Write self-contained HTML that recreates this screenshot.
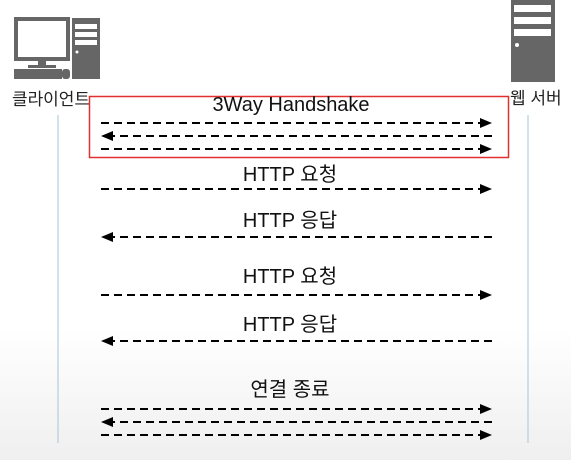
<!DOCTYPE html><html><head><meta charset="utf-8"><style>
html,body{margin:0;padding:0}
body{width:571px;height:460px;overflow:hidden;background:linear-gradient(#fff 0,#fff 330px,#efefef 460px);font-family:"Liberation Sans","Noto Sans CJK KR",sans-serif}
</style></head><body>
<svg width="571" height="460" xmlns="http://www.w3.org/2000/svg" style="position:absolute;left:0;top:0">
<defs><marker id="a" markerWidth="12" markerHeight="10" refX="2" refY="5" orient="auto" markerUnits="userSpaceOnUse"><path d="M0,0 L12,5 L0,10 Z" fill="#000"/></marker></defs>
<rect x="14" y="17" width="56" height="44" fill="#666"/>
<rect x="18" y="21" width="48" height="36" fill="#fff"/>
<rect x="38" y="61" width="8" height="5" fill="#666"/>
<rect x="28" y="65" width="28" height="3" fill="#666"/>
<rect x="14" y="69" width="48" height="10" fill="#666"/>
<rect x="62" y="69" width="8" height="10" rx="3" fill="#666"/>
<rect x="72" y="18" width="28" height="61" fill="#666"/>
<rect x="75" y="24" width="22" height="5" fill="#fff"/>
<rect x="75" y="32" width="22" height="5" fill="#fff"/>
<rect x="75" y="40" width="22" height="5" fill="#fff"/>
<circle cx="77" cy="52" r="1.5" fill="#fff"/>
<rect x="511" y="0" width="44" height="82" fill="#666"/>
<rect x="514" y="5" width="37" height="7" fill="#fff"/>
<rect x="514" y="17" width="37" height="7" fill="#fff"/>
<rect x="514" y="29" width="37" height="7" fill="#fff"/>
<circle cx="517" cy="45" r="2" fill="#fff"/>
<text x="12" y="105" font-size="17" fill="#222" font-family="Liberation Sans,Noto Sans CJK KR,sans-serif" textLength="78">클라이언트</text>
<text x="510" y="104" font-size="17" fill="#222" font-family="Liberation Sans,Noto Sans CJK KR,sans-serif">웹 서버</text>
<line x1="58" y1="115" x2="58" y2="443" stroke="#a9c4d8" stroke-width="1"/>
<line x1="528" y1="115" x2="528" y2="443" stroke="#a9c4d8" stroke-width="1"/>
<rect x="89.5" y="96.5" width="419" height="61" fill="none" stroke="#e03030" stroke-width="1.5"/>
<g font-size="20" fill="#111" text-anchor="middle" font-family="Liberation Sans,Noto Sans CJK KR,sans-serif">
<text x="291" y="111">3Way Handshake</text>
<text x="290" y="181">HTTP 요청</text>
<text x="290" y="227">HTTP 응답</text>
<text x="290" y="283">HTTP 요청</text>
<text x="290" y="331">HTTP 응답</text>
<text x="290" y="396">연결 종료</text>
</g>
<g stroke="#000" stroke-width="2" stroke-dasharray="8,5">
<line x1="101" y1="123" x2="482" y2="123" marker-end="url(#a)"/>
<line x1="492" y1="136" x2="111" y2="136" marker-end="url(#a)"/>
<line x1="101" y1="149" x2="482" y2="149" marker-end="url(#a)"/>
<line x1="101" y1="189" x2="482" y2="189" marker-end="url(#a)"/>
<line x1="492" y1="237" x2="111" y2="237" marker-end="url(#a)"/>
<line x1="101" y1="295" x2="482" y2="295" marker-end="url(#a)"/>
<line x1="492" y1="341" x2="111" y2="341" marker-end="url(#a)"/>
<line x1="101" y1="409" x2="482" y2="409" marker-end="url(#a)"/>
<line x1="492" y1="422" x2="111" y2="422" marker-end="url(#a)"/>
<line x1="101" y1="435" x2="482" y2="435" marker-end="url(#a)"/>
</g>
</svg>
</body></html>
